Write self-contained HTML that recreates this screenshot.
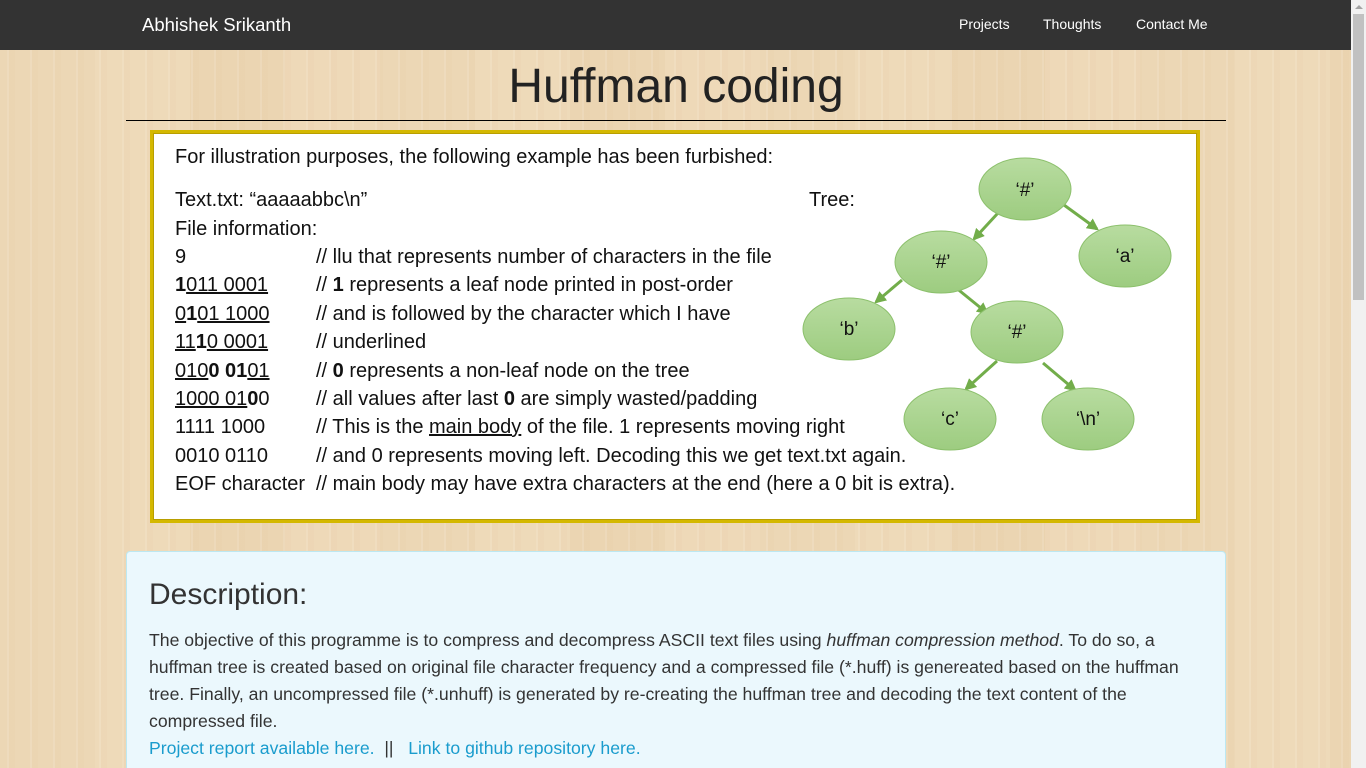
<!DOCTYPE html>
<html><head><meta charset="utf-8">
<style>
*{margin:0;padding:0;box-sizing:border-box}
html,body{width:1366px;height:768px;overflow:hidden}
body{font-family:"Liberation Sans",sans-serif;position:relative;
background:
repeating-linear-gradient(90deg,rgba(255,255,255,0) 0 7px,rgba(255,255,255,.10) 7px 9px,rgba(200,160,110,.04) 9px 15px,rgba(255,255,255,0) 15px 23px),
repeating-linear-gradient(90deg,#ecd7b5 0 95px,#eedab9 95px 190px,#ebd5b2 190px 285px,#eed9b8 285px 380px);
}
.nav{position:absolute;left:0;top:0;width:1351px;height:50px;background:#333}
.nav a{position:absolute;color:#fff;text-decoration:none;font-size:14px;top:16px}
.brand{font-size:18.5px!important;top:14px!important;left:142px}
.sb{position:absolute;left:1351px;top:0;width:15px;height:768px;background:#f1f1f1}
.sb .th{position:absolute;left:2px;top:14px;width:11px;height:286px;background:#c1c1c1}
.sb .ar{position:absolute;left:4px;top:5px;width:0;height:0;border-left:4px solid transparent;border-right:4px solid transparent;border-bottom:4px solid #a3a3a3}
h1{position:absolute;left:126px;width:1100px;top:58px;text-align:center;font-weight:normal;font-size:48px;color:#222;line-height:58px}
.hr{position:absolute;left:126px;width:1100px;top:120px;height:1px;background:#000}
.img{position:absolute;left:150px;top:130px;width:1050px;height:393px;background:#fff;border:3px solid #d4b800;box-shadow:inset 0 0 0 1px #b89e00}
.l{position:absolute;font-size:20px;color:#111;white-space:nowrap;line-height:22px}
.u{text-decoration:underline}
.desc{position:absolute;left:126px;top:551px;width:1100px;height:230px;background:#ebf8fd;border:1px solid #bce8f1;border-radius:4px}
.desc h2{position:absolute;left:22px;top:26px;font-weight:normal;font-size:30px;color:#333}
.desc p{position:absolute;left:22px;top:75px;font-size:17.65px;line-height:27px;color:#333;white-space:nowrap}
.desc a{color:#1a9ccd;text-decoration:none}
</style></head><body>
<div class="nav">
<a class="brand">Abhishek Srikanth</a>
<a style="left:959px">Projects</a>
<a style="left:1043px">Thoughts</a>
<a style="left:1136px">Contact Me</a>
</div>
<div class="sb"><div class="ar"></div><div class="th"></div></div>
<h1>Huffman coding</h1>
<div class="hr"></div>
<div class="img"></div>
<div class="l" style="left:175px;top:146px">For illustration purposes, the following example has been furbished:</div>
<div class="l" style="left:175px;top:189px">Text.txt: “aaaaabbc\n”</div>
<div class="l" style="left:809px;top:189px">Tree:</div>
<div class="l" style="left:175px;top:218px">File information:</div>
<div class="l" style="left:175px;top:246px">9</div>
<div class="l" style="left:175px;top:274px"><b>1</b><span class="u">011 0001</span></div>
<div class="l" style="left:175px;top:303px"><span class="u">0</span><b>1</b><span class="u">01 1000</span></div>
<div class="l" style="left:175px;top:331px"><span class="u">11</span><b>1</b><span class="u">0 0001</span></div>
<div class="l" style="left:175px;top:360px"><span class="u">010</span><b>0 01</b><span class="u">01</span></div>
<div class="l" style="left:175px;top:388px"><span class="u">1000 01</span><b>0</b>0</div>
<div class="l" style="left:175px;top:416px">1111 1000</div>
<div class="l" style="left:175px;top:445px">0010 0110</div>
<div class="l" style="left:175px;top:473px">EOF character</div>
<div class="l" style="left:316px;top:246px">// llu that represents number of characters in the file</div>
<div class="l" style="left:316px;top:274px">// <b>1</b> represents a leaf node printed in post-order</div>
<div class="l" style="left:316px;top:303px">// and is followed by the character which I have</div>
<div class="l" style="left:316px;top:331px">// underlined</div>
<div class="l" style="left:316px;top:360px">// <b>0</b> represents a non-leaf node on the tree</div>
<div class="l" style="left:316px;top:388px">// all values after last <b>0</b> are simply wasted/padding</div>
<div class="l" style="left:316px;top:416px">// This is the <span class="u">main body</span> of the file. 1 represents moving right</div>
<div class="l" style="left:316px;top:445px">// and 0 represents moving left. Decoding this we get text.txt again.</div>
<div class="l" style="left:316px;top:473px">// main body may have extra characters at the end (here a 0 bit is extra).</div>
<svg style="position:absolute;left:0;top:0" width="1366" height="768">
<defs>
<linearGradient id="g" x1="0" y1="0" x2="0" y2="1"><stop offset="0" stop-color="#b8dca0"/><stop offset="1" stop-color="#9dcc80"/></linearGradient>
<marker id="m" viewBox="0 0 10 10" refX="8" refY="5" markerWidth="4" markerHeight="4" orient="auto"><path d="M0,0L10,5L0,10z" fill="#72ad4a"/></marker>
</defs>
<g stroke="#72ad4a" stroke-width="3" marker-end="url(#m)">
<line x1="998" y1="213" x2="974" y2="239"/>
<line x1="1064" y1="205" x2="1097" y2="229"/>
<line x1="902" y1="280" x2="876" y2="302"/>
<line x1="955" y1="287" x2="987" y2="313"/>
<line x1="997" y1="361" x2="966" y2="389"/>
<line x1="1043" y1="363" x2="1075" y2="390"/>
</g>
<g fill="url(#g)" stroke="#8cc06c" stroke-width="1">
<ellipse cx="1025" cy="189" rx="46" ry="31"/>
<ellipse cx="941" cy="262" rx="46" ry="31"/>
<ellipse cx="1125" cy="256" rx="46" ry="31"/>
<ellipse cx="849" cy="329" rx="46" ry="31"/>
<ellipse cx="1017" cy="332" rx="46" ry="31"/>
<ellipse cx="950" cy="419" rx="46" ry="31"/>
<ellipse cx="1088" cy="419" rx="46" ry="31"/>
</g>
<g font-family="Liberation Sans" font-size="19" fill="#111" text-anchor="middle">
<text x="1025" y="196">‘#’</text>
<text x="941" y="268">‘#’</text>
<text x="1125" y="262">‘a’</text>
<text x="849" y="335">‘b’</text>
<text x="1017" y="338">‘#’</text>
<text x="950" y="425">‘c’</text>
<text x="1088" y="425">‘\n’</text>
</g>
</svg>
<div class="desc">
<h2>Description:</h2>
<p>The objective of this programme is to compress and decompress ASCII text files using <i>huffman compression method</i>. To do so, a<br>huffman tree is created based on original file character frequency and a compressed file (*.huff) is genereated based on the huffman<br>tree. Finally, an uncompressed file (*.unhuff) is generated by re-creating the huffman tree and decoding the text content of the<br>compressed file.<br><a>Project report available here.</a> &nbsp;||&nbsp;&nbsp; <a>Link to github repository here.</a></p>
</div>
</body></html>
